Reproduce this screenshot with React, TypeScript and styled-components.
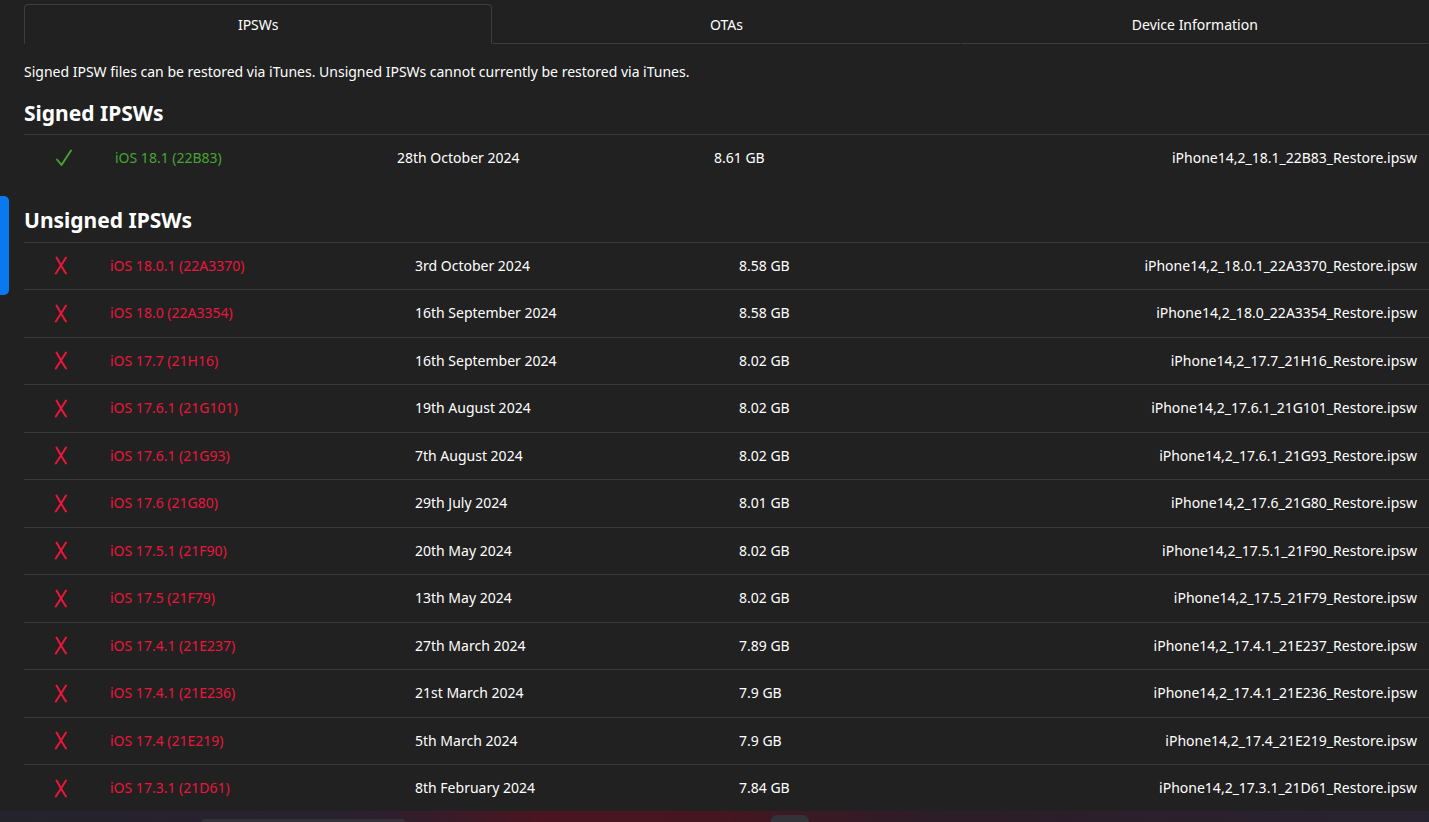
import React from "react";
import styled, { createGlobalStyle } from "styled-components";

const GlobalStyle = createGlobalStyle`
  html, body { margin: 0; padding: 0; background: #212121; overflow: hidden; }
  body {
    font-family: "Noto Sans", "Open Sans", sans-serif;
    font-size: 14px;
    color: #ffffff;
  }
`;

const Page = styled.main`
  padding: 4px 0 0 24px;
  min-height: 822px;
  box-sizing: border-box;
`;

const TabBar = styled.nav`
  display: grid;
  grid-template-columns: repeat(3, 1fr);
  height: 40px;
`;

const Tab = styled.button<{ $active?: boolean }>`
  font-family: inherit;
  font-size: 14px;
  color: #ffffff;
  background: transparent;
  cursor: pointer;
  padding: 0;
  border: 1px solid transparent;
  border-radius: 4px 4px 0 0;
  border-color: ${(p) => (p.$active ? "#3d3d3d #3d3d3d transparent" : "transparent transparent #3d3d3d")};
`;

const Note = styled.p`
  margin: 17px 0 0;
  line-height: 22px;
`;

const Heading = styled.h2`
  margin: 14px 0 0;
  font-size: 21px;
  font-weight: 700;
  line-height: 32px;
  padding-bottom: 5px;
`;

const UnsignedHeading = styled(Heading)`
  margin-top: 21px;
  padding-bottom: 6px;
`;

const Table = styled.table`
  width: 100%;
  border-collapse: collapse;
  table-layout: fixed;
  border-top: 1px solid #3a3a3a;
`;

const Col = styled.col<{ $w?: number }>`
  width: ${(p) => (p.$w ? `${p.$w}px` : "auto")};
`;

const Row = styled.tr<{ $last?: boolean }>`
  border-bottom: 1px solid ${(p) => (p.$last ? "transparent" : "#3a3a3a")};
`;

const Cell = styled.td<{ $align?: string }>`
  padding: 12px;
  line-height: 22.5px;
  white-space: nowrap;
  text-align: ${(p) => p.$align || "left"};
  vertical-align: middle;
`;

const IconCell = styled(Cell)`
  padding: 0;
  text-align: center;
  line-height: 0;
`;

const Version = styled.span<{ $signed?: boolean }>`
  color: ${(p) => (p.$signed ? "#45a530" : "#ea163c")};
`;

const SideTab = styled.div`
  position: fixed;
  left: 0;
  top: 196px;
  width: 9px;
  height: 99px;
  background: #0a79ef;
  border-radius: 0 5px 5px 0;
`;

const BottomGlow = styled.div`
  position: fixed;
  left: 0;
  right: 0;
  bottom: 0;
  height: 11px;
  background: linear-gradient(90deg, #24232b 0%, #2a2030 25%, #4a1520 38%, #451620 50%, #2d1d28 65%, #282330 100%);
`;

const Pill = styled.div<{ $left: number; $width: number; $top: number }>`
  position: absolute;
  left: ${(p) => p.$left}px;
  width: ${(p) => p.$width}px;
  top: ${(p) => p.$top}px;
  bottom: 0;
  background: #333238;
  border-radius: 6px 6px 0 0;
`;

const CheckIcon = () => (
  <svg width="18" height="18" viewBox="0 0 18 18" fill="none">
    <path d="M2 10.5 L6.5 16 L16 1.5" stroke="#45a530" strokeWidth="1.9" strokeLinecap="round" strokeLinejoin="round" />
  </svg>
);

const CrossIcon = () => (
  <svg width="14" height="19" viewBox="0 0 14 19" fill="none">
    <path d="M2.5 1.5 C5 6 8.5 12.5 12 17.5" stroke="#ea163c" strokeWidth="2" strokeLinecap="round" />
    <path d="M12 1.5 C9 6.5 5 12.5 1.8 17.5" stroke="#ea163c" strokeWidth="2" strokeLinecap="round" />
  </svg>
);

type Ipsw = { version: string; date: string; size: string; file: string };

const signed: Ipsw[] = [
  { version: "iOS 18.1 (22B83)", date: "28th October 2024", size: "8.61 GB", file: "iPhone14,2_18.1_22B83_Restore.ipsw" },
];

const unsigned: Ipsw[] = [
  { version: "iOS 18.0.1 (22A3370)", date: "3rd October 2024", size: "8.58 GB", file: "iPhone14,2_18.0.1_22A3370_Restore.ipsw" },
  { version: "iOS 18.0 (22A3354)", date: "16th September 2024", size: "8.58 GB", file: "iPhone14,2_18.0_22A3354_Restore.ipsw" },
  { version: "iOS 17.7 (21H16)", date: "16th September 2024", size: "8.02 GB", file: "iPhone14,2_17.7_21H16_Restore.ipsw" },
  { version: "iOS 17.6.1 (21G101)", date: "19th August 2024", size: "8.02 GB", file: "iPhone14,2_17.6.1_21G101_Restore.ipsw" },
  { version: "iOS 17.6.1 (21G93)", date: "7th August 2024", size: "8.02 GB", file: "iPhone14,2_17.6.1_21G93_Restore.ipsw" },
  { version: "iOS 17.6 (21G80)", date: "29th July 2024", size: "8.01 GB", file: "iPhone14,2_17.6_21G80_Restore.ipsw" },
  { version: "iOS 17.5.1 (21F90)", date: "20th May 2024", size: "8.02 GB", file: "iPhone14,2_17.5.1_21F90_Restore.ipsw" },
  { version: "iOS 17.5 (21F79)", date: "13th May 2024", size: "8.02 GB", file: "iPhone14,2_17.5_21F79_Restore.ipsw" },
  { version: "iOS 17.4.1 (21E237)", date: "27th March 2024", size: "7.89 GB", file: "iPhone14,2_17.4.1_21E237_Restore.ipsw" },
  { version: "iOS 17.4.1 (21E236)", date: "21st March 2024", size: "7.9 GB", file: "iPhone14,2_17.4.1_21E236_Restore.ipsw" },
  { version: "iOS 17.4 (21E219)", date: "5th March 2024", size: "7.9 GB", file: "iPhone14,2_17.4_21E219_Restore.ipsw" },
  { version: "iOS 17.3.1 (21D61)", date: "8th February 2024", size: "7.84 GB", file: "iPhone14,2_17.3.1_21D61_Restore.ipsw" },
];

function IpswTable({ items, isSigned, widths }: { items: Ipsw[]; isSigned?: boolean; widths: number[] }) {
  return (
    <Table>
      <colgroup>
        {widths.map((w, i) => (
          <Col key={i} $w={w} />
        ))}
        <Col />
      </colgroup>
      <tbody>
        {items.map((it, i) => (
          <Row key={it.file} $last={isSigned && i === items.length - 1}>
            <IconCell>{isSigned ? <CheckIcon /> : <CrossIcon />}</IconCell>
            <Cell>
              <Version $signed={isSigned}>{it.version}</Version>
            </Cell>
            <Cell>{it.date}</Cell>
            <Cell>{it.size}</Cell>
            <Cell $align="right">{it.file}</Cell>
          </Row>
        ))}
      </tbody>
    </Table>
  );
}

export default function App() {
  return (
    <>
      <GlobalStyle />
      <Page>
        <TabBar>
          <Tab $active>IPSWs</Tab>
          <Tab>OTAs</Tab>
          <Tab>Device Information</Tab>
        </TabBar>
        <Note>Signed IPSW files can be restored via iTunes. Unsigned IPSWs cannot currently be restored via iTunes.</Note>
        <Heading>Signed IPSWs</Heading>
        <IpswTable items={signed} isSigned widths={[79, 282, 317, 300]} />
        <UnsignedHeading>Unsigned IPSWs</UnsignedHeading>
        <IpswTable items={unsigned} widths={[74, 305, 324, 300]} />
      </Page>
      <SideTab />
      <BottomGlow>
        <Pill $left={202} $width={203} $top={8} />
        <Pill $left={771} $width={38} $top={4} />
      </BottomGlow>
    </>
  );
}
